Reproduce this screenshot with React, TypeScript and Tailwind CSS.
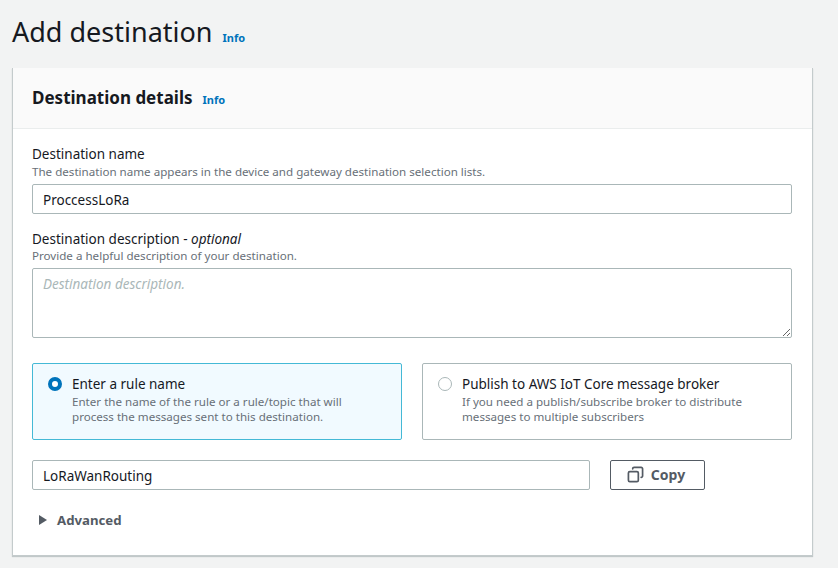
// Add destination form
import { Copy } from 'lucide-react';

function Info() {
  return <span className="text-[11px] font-bold text-[#0073bb] leading-none">Info</span>;
}

export default function App() {
  return (
    <div className="h-[568px] w-[838px] overflow-hidden bg-[#f2f3f3] px-3 font-['Noto_Sans',sans-serif] text-[#16191f]">
      {/* Title */}
      <div className="flex h-[68px] items-start pt-[12px]">
        <h1 className="text-[27px] leading-[40px]">Add destination</h1>
        <span className="ml-[10px] mt-[20px] flex"><Info /></span>
      </div>

      {/* Card */}
      <div className="h-[488px] w-[801px] border-r border-b border-l border-[#c4cbcc] bg-white shadow-[0_1px_1px_rgba(0,28,36,0.2)]">
        <div className="flex h-[61px] items-center border-b border-[#eaeded] bg-[#fafafa] pl-[19px]">
          <h2 className="-mt-[2px] text-[17px] font-bold leading-none">Destination details</h2>
          <span className="ml-[10px] mt-[2px] flex"><Info /></span>
        </div>

        <div className="pl-[19px] pt-[16px]">
          {/* Name */}
          <label className="block text-[13.5px] leading-[18px]">Destination name</label>
          <p className="text-[11.6px] leading-[18px] text-[#687078]">
            The destination name appears in the device and gateway destination selection lists.
          </p>
          <input
            readOnly
            value="ProccessLoRa"
            className="mt-[3px] block h-[30px] w-[760px] rounded-[2px] border border-[#aab7b8] bg-white px-[10px] pt-[1px] text-[13.5px] outline-none"
          />

          {/* Description */}
          <label className="mt-[16px] block text-[13.5px] leading-[18px]">
            Destination description - <i>optional</i>
          </label>
          <p className="-mt-[1px] text-[11.6px] leading-[18px] text-[#687078]">
            Provide a helpful description of your destination.
          </p>
          <textarea
            readOnly
            placeholder="Destination description."
            className="mt-[3px] block h-[70px] w-[760px] rounded-[2px] border border-[#aab7b8] bg-white px-[10px] py-[5px] text-[13.5px] outline-none placeholder:italic placeholder:text-[#aab7b8]"
          />

          {/* Radio tiles */}
          <div className="mt-[25px] flex gap-5">
            <div className="flex h-[77px] w-[370px] rounded-[2px] border border-[#44b9d6] bg-[#f1faff] pl-[15px] pt-[11px]">
              <span className="mt-[2px] h-[14px] w-[14px] shrink-0 rounded-full border-[4px] border-[#0073bb] bg-white" />
              <div className="ml-[10px]">
                <div className="text-[13.5px] leading-[18px]">Enter a rule name</div>
                <div className="mt-[1px] text-[11.6px] leading-[15px] text-[#687078]">
                  Enter the name of the rule or a rule/topic that will
                  <br />
                  process the messages sent to this destination.
                </div>
              </div>
            </div>
            <div className="flex h-[77px] w-[370px] rounded-[2px] border border-[#aab7b8] bg-white pl-[15px] pt-[11px]">
              <span className="mt-[2px] h-[14px] w-[14px] shrink-0 rounded-full border border-[#aab7b8] bg-white" />
              <div className="ml-[10px]">
                <div className="text-[13.5px] leading-[18px]">Publish to AWS IoT Core message broker</div>
                <div className="mt-[1px] text-[11.6px] leading-[15px] text-[#687078]">
                  If you need a publish/subscribe broker to distribute
                  <br />
                  messages to multiple subscribers
                </div>
              </div>
            </div>
          </div>

          {/* Rule name + copy */}
          <div className="mt-5 flex items-center">
            <input
              readOnly
              value="LoRaWanRouting"
              className="block h-[30px] w-[558px] rounded-[2px] border border-[#aab7b8] bg-white px-[10px] pt-[1px] text-[13.5px] outline-none"
            />
            <button className="ml-5 flex h-[30px] w-[95px] items-center justify-center gap-[7px] rounded-[2px] border border-[#545b64] bg-white pb-[1px] pr-[3px] text-[14px] font-bold text-[#545b64]">
              <Copy size={17} strokeWidth={2.4} className="-scale-x-100" />
              Copy
            </button>
          </div>

          {/* Advanced */}
          <div className="mt-[20px] flex items-center pl-[7px] text-[13.2px] font-bold leading-[20px] text-[#545b64]">
            <svg width="8" height="10" viewBox="0 0 8 10" className="fill-[#545b64]">
              <path d="M0 0 L8 5 L0 10 Z" />
            </svg>
            <span className="ml-[10px]">Advanced</span>
          </div>
        </div>
      </div>
    </div>
  );
}
